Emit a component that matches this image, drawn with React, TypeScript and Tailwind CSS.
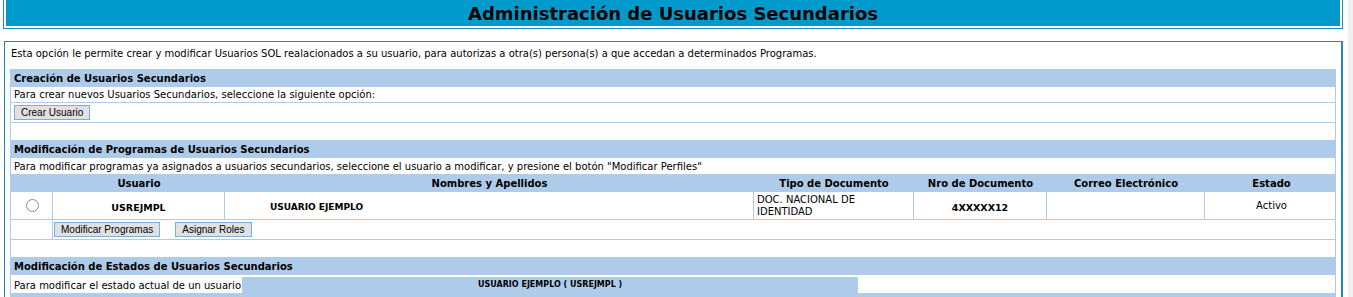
import React from 'react';

const font = { fontFamily: '"DejaVu Sans", Verdana, sans-serif' };

const cols = 'grid grid-cols-[42px_172px_529px_160px_133px_158px_133px]';

function Btn({ children }: { children: React.ReactNode }) {
  return (
    <button className="h-[15px] px-[6px] bg-[#e1e1e1] border border-[#7aaee0] text-[10px] leading-[13px] text-black font-['Liberation_Sans',Arial,sans-serif]">
      {children}
    </button>
  );
}

function Bar({ children }: { children: React.ReactNode }) {
  return (
    <div className="h-[18px] bg-[#aecbe9] flex items-center pl-[3px] font-bold text-[10px] text-black">
      {children}
    </div>
  );
}

export default function App() {
  const headers = ['', 'Usuario', 'Nombres y Apellidos', 'Tipo de Documento', 'Nro de Documento', 'Correo Electrónico', 'Estado'];

  return (
    <div className="flex bg-white h-[297px] overflow-hidden text-black" style={font}>
      <div className="flex-1 min-w-0">
        {/* titulo */}
        <div className="-mt-[3px] ml-[3px] mr-[5px] border border-[#2189bb] p-[2px]">
          <div className="h-[26px] bg-[#009bcc] flex items-center justify-center">
            <h1 className="text-[18px] font-bold leading-none pt-[1px]">Administración de Usuarios Secundarios</h1>
          </div>
        </div>

        {/* contenido */}
        <div className="mt-[12px] ml-[4px] mr-[5px] border border-[#2189bb] border-r-2 pt-[5px] px-[5px] h-[300px]">
          <p className="text-[10px] leading-[14px] pl-[1px]">
            Esta opción le permite crear y modificar Usuarios SOL realacionados a su usuario, para autorizas a otra(s) persona(s) a que accedan a determinados Programas.
          </p>

          <div className="mt-[8px] border-x border-[#aecbe9] text-[10px]">
            <Bar>Creación de Usuarios Secundarios</Bar>
            <div className="h-[16px] flex items-center pl-[3px] border-b border-[#aecbe9]">
              Para crear nuevos Usuarios Secundarios, seleccione la siguiente opción:
            </div>
            <div className="h-[20px] flex items-center pl-[3px] border-b border-[#aecbe9]">
              <Btn>Crear Usuario</Btn>
            </div>
            <div className="h-[17px]" />

            <Bar>Modificación de Programas de Usuarios Secundarios</Bar>
            <div className="h-[16px] flex items-center pl-[3px]">
              Para modificar programas ya asignados a usuarios secundarios, seleccione el usuario a modificar, y presione el botón "Modificar Perfiles"
            </div>
            <div className={`${cols} h-[18px] bg-[#aecbe9] font-bold`}>
              {headers.map((h, i) => (
                <div key={i} className="flex items-center justify-center">{h}</div>
              ))}
            </div>
            <div className={`${cols} h-[28px] border-b border-[#aecbe9]`}>
              <div className="flex items-center justify-center border-r border-[#aecbe9] pl-[2px]">
                <span className="w-[13px] h-[13px] rounded-full border border-[#8a8a8a] bg-white" />
              </div>
              <div className="flex items-center justify-center border-r border-[#aecbe9] font-bold text-[9.5px] pt-[5px]">USREJMPL</div>
              <div className="flex items-center pl-[45px] border-r border-[#aecbe9] font-bold text-[9px] pt-[5px]">USUARIO EJEMPLO</div>
              <div className="flex items-center pl-[3px] border-r border-[#aecbe9] leading-[12px] pt-[1px]">
                DOC. NACIONAL DE<br />IDENTIDAD
              </div>
              <div className="flex items-center justify-center border-r border-[#aecbe9] font-bold text-[9.5px] pt-[5px]">4XXXXX12</div>
              <div className="border-r border-[#aecbe9]" />
              <div className="flex items-center justify-center">Activo</div>
            </div>
            <div className="flex h-[20px] border-b border-[#aecbe9]">
              <div className="w-[42px] border-r border-[#aecbe9]" />
              <div className="flex items-center gap-[15px] pl-[1px]">
                <Btn>Modificar Programas</Btn>
                <Btn>Asignar Roles</Btn>
              </div>
            </div>
            <div className="h-[17px]" />

            <Bar>Modificación de Estados de Usuarios Secundarios</Bar>
            <div className="flex h-[16px] mt-[2px]">
              <div className="w-[231px] flex items-center pl-[3px] bg-white">
                Para modificar el estado actual de un usuario
              </div>
              <div className="w-[616px] bg-[#aecbe9] flex items-center pl-[236px] text-[8px] font-bold">
                USUARIO EJEMPLO ( USREJMPL )
              </div>
              <div className="flex-1 bg-white" />
            </div>
            <div className="h-[18px] bg-[#aecbe9]" />
          </div>
        </div>
      </div>
      <div className="w-[5px] bg-[#f0f0f0]" />
    </div>
  );
}
